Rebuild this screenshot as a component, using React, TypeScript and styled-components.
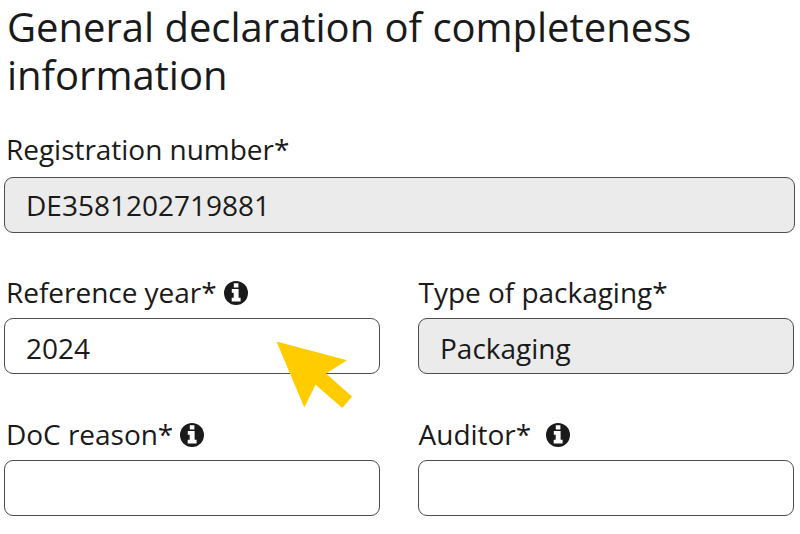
import React from "react";
import styled, { createGlobalStyle } from "styled-components";

const GlobalStyle = createGlobalStyle`
  * { box-sizing: border-box; }
  body {
    margin: 0;
    background: #fff;
    color: #1a1a1a;
    font-family: "Open Sans", sans-serif;
    overflow: hidden;
  }
`;

const Page = styled.main`
  position: relative;
  width: 800px;
  height: 534px;
  padding: 3px 5px 0 4px;
`;

const Title = styled.h1`
  margin: 0;
  padding-left: 3px;
  height: 127px;
  font-size: 40px;
  line-height: 48px;
  font-weight: 400;
  letter-spacing: -0.02px;
`;

const Row = styled.div`
  display: grid;
  grid-template-columns: 376px 376px;
  column-gap: 38px;
  height: 142px;
`;

const WideRow = styled(Row)`
  grid-template-columns: 791px;
  height: 143px;
`;

const Field = styled.div<{ $labelHeight?: number }>`
  display: grid;
  grid-template-rows: ${(p) => p.$labelHeight ?? 45}px 56px;
`;

const Label = styled.label<{ $gap?: number; $inset?: number }>`
  display: flex;
  align-items: center;
  gap: ${(p) => p.$gap ?? 7}px;
  height: 38px;
  padding-left: ${(p) => p.$inset ?? 2}px;
  font-size: 28px;
  line-height: 38px;
  letter-spacing: -0.03px;
  white-space: nowrap;
`;

const InfoSvg = styled.svg`
  width: 24px;
  height: 24px;
  flex: none;
  margin-top: 2px;
`;

const InfoIcon = () => (
  <InfoSvg viewBox="0 0 24 24" aria-hidden="true">
    <circle cx="12" cy="12" r="12" fill="#1a1a1a" />
    <path d="M9.8 2.3h4.6v4.1H9.8zM7.8 8h6.8v8.7h2v3.8H7.7v-3.8h2v-5H7.8z" fill="#fff" />
  </InfoSvg>
);

const Value = styled.div<{ $disabled?: boolean; $drop?: number }>`
  display: flex;
  align-items: center;
  height: 56px;
  padding: ${(p) => p.$drop ?? 0}px 0 0 21px;
  border: 1px solid #4d4d4d;
  border-radius: 9px;
  background: ${(p) => (p.$disabled ? "#ebebeb" : "#fff")};
  font-size: 28px;
  line-height: 38px;
`;

const Pointer = styled.svg`
  position: absolute;
  left: 270px;
  top: 335px;
  width: 90px;
  height: 80px;
`;

export default function App() {
  return (
    <>
      <GlobalStyle />
      <Page>
        <Title>
          General declaration of completeness
          <br />
          information
        </Title>
        <WideRow>
          <Field $labelHeight={47}>
            <Label>Registration number*</Label>
            <Value $disabled>DE3581202719881</Value>
          </Field>
        </WideRow>
        <Row>
          <Field>
            <Label>
              Reference year* <InfoIcon />
            </Label>
            <Value $drop={4}>2024</Value>
          </Field>
          <Field>
            <Label $inset={0.6}>Type of packaging*</Label>
            <Value $disabled $drop={4}>Packaging</Value>
          </Field>
        </Row>
        <Row>
          <Field>
            <Label>
              DoC reason* <InfoIcon />
            </Label>
            <Value />
          </Field>
          <Field>
            <Label $gap={15} $inset={0.6}>
              Auditor* <InfoIcon />
            </Label>
            <Value />
          </Field>
        </Row>
        <Pointer viewBox="270 335 90 80" aria-hidden="true">
          <path d="M276.5 341.5L347 360.3L326 373.5L352 396.5L342.3 408L315.5 384.8L304.3 407.5Z" fill="#fc0" />
        </Pointer>
      </Page>
    </>
  );
}
